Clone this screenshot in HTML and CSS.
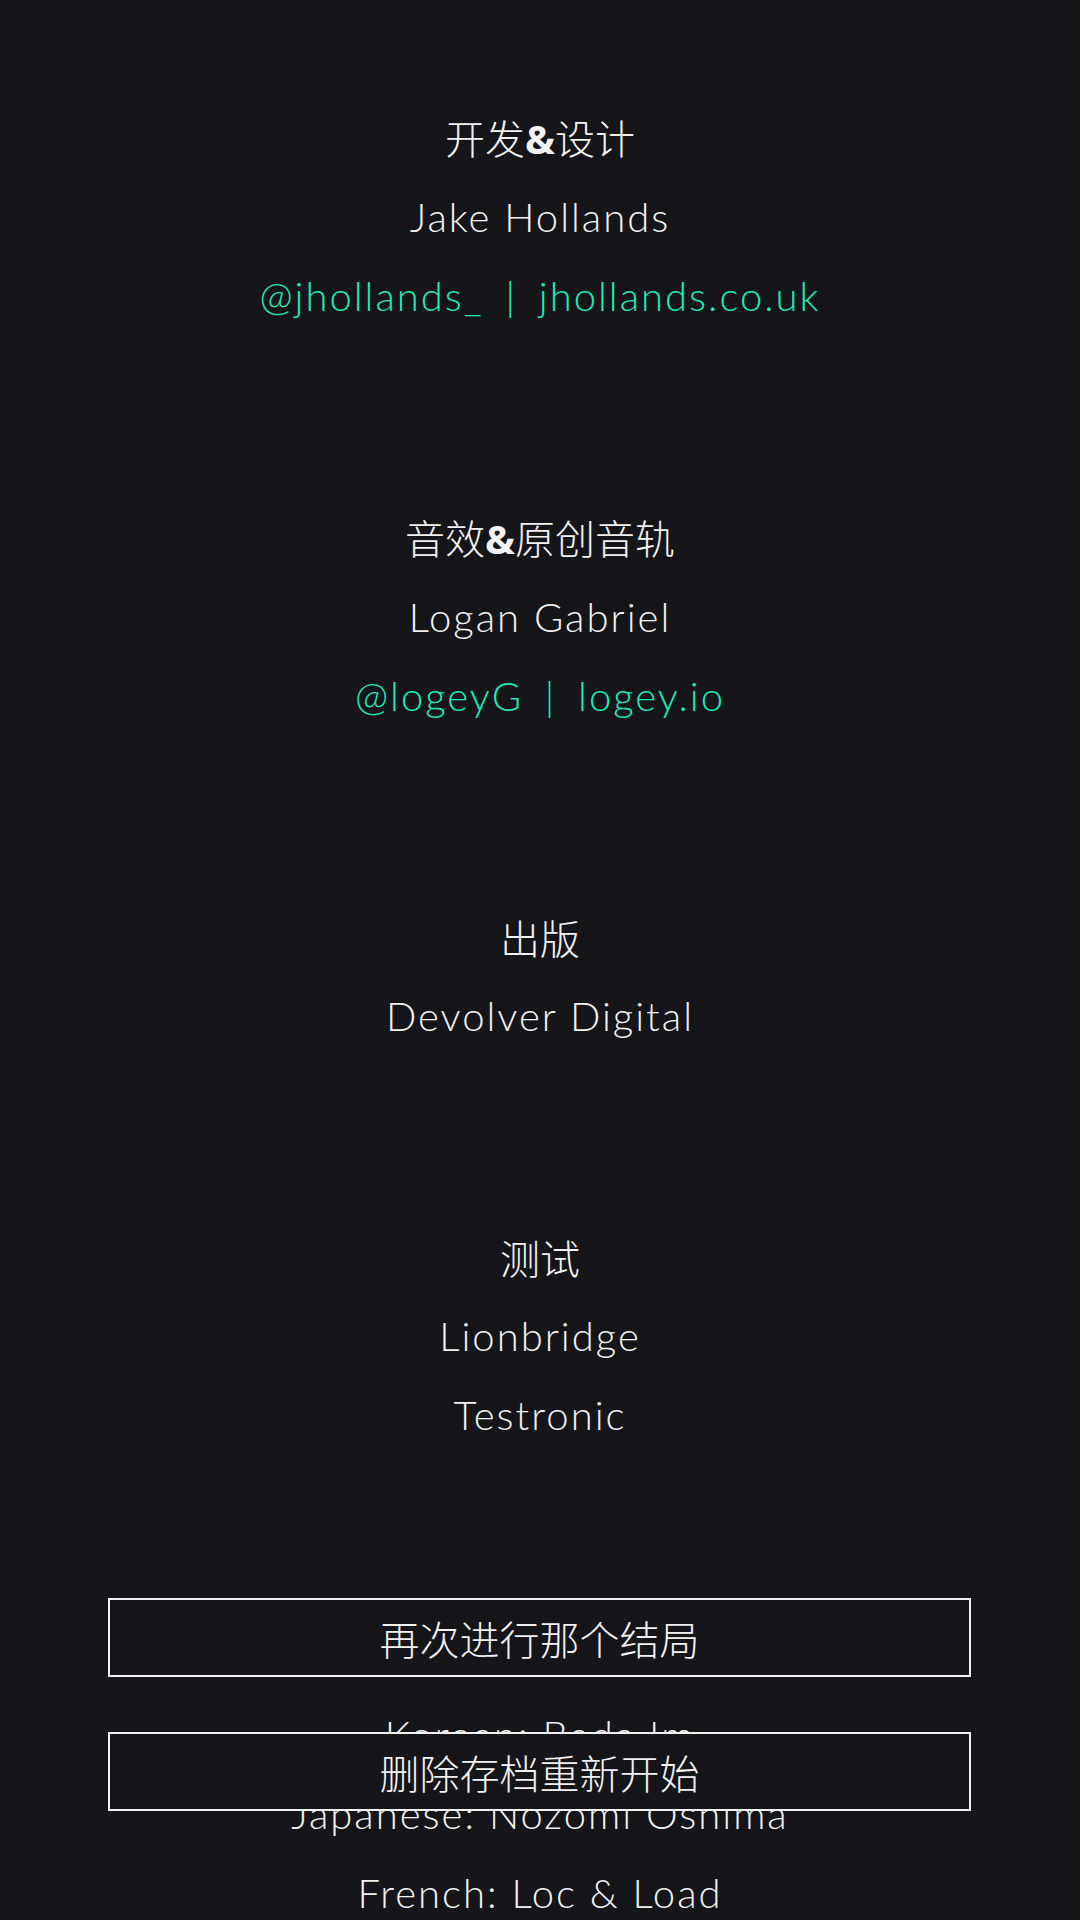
FILE: index.html
```html
<!DOCTYPE html>
<html lang="zh-CN">

<head>
    <meta charset="UTF-8">
    <meta name="viewport" content="width=device-width, initial-scale=1.0">
    <title>制作人员</title>
    <link rel="stylesheet" href="styles.css">
</head>

<body>
    <div class="credits">
        <div class="section">
            <div class="role">开发<span class="amp">&amp;</span>设计</div>
            <div class="name">Jake Hollands</div>
            <div class="link">@jhollands_ &nbsp;| &nbsp;jhollands.co.uk</div>
        </div>
        <div class="section">
            <div class="role">音效<span class="amp">&amp;</span>原创音轨</div>
            <div class="name">Logan Gabriel</div>
            <div class="link">@logeyG &nbsp;| &nbsp;logey.io</div>
        </div>
        <div class="section">
            <div class="role">出版</div>
            <div class="name">Devolver Digital</div>
        </div>
        <div class="section">
            <div class="role">测试</div>
            <div class="name">Lionbridge</div>
            <div class="name">Testronic</div>
        </div>
        <!-- 这一段的标题被按钮挡住了 -->
        <div class="section section-loc">
            <div class="name">Korean: Bada Im</div>
            <div class="name">Japanese: Nozomi Oshima</div>
            <div class="name">French: Loc &amp; Load</div>
        </div>
    </div>

    <button class="btn btn-replay">再次进行那个结局</button>
    <button class="btn btn-reset">删除存档重新开始</button>
</body>

</html>
```

FILE: styles.css
```css
html, body {
    margin: 0;
    padding: 0;
}

body {
    position: relative;
    width: 1080px;
    height: 1920px;
    overflow: hidden;
    background-color: #15151a;
    color: #f2f2f2;
    font-family: "Lato", "Noto Sans", "Noto Sans CJK SC", sans-serif;
    font-weight: 300;
}

.credits {
    padding-top: 98px;
    text-align: center;
    font-size: 40px;
    line-height: 79px;
}

.section {
    margin-bottom: 162px;
}

.section-loc {
    padding-top: 79px;
}

.role {
    font-family: "Noto Sans CJK SC", sans-serif;
    font-weight: 300;
}

.amp {
    font-family: "Open Sans", sans-serif;
    font-weight: 700;
}

.name,
.link {
    letter-spacing: 2px;
}

.link {
    color: #20ebb8;
    word-spacing: -2px;
}

.btn {
    position: absolute;
    left: 108px;
    width: 863px;
    height: 79px;
    box-sizing: border-box;
    border: 2px solid #f2f2f2;
    background-color: #15151a;
    color: #f2f2f2;
    font-family: "Noto Sans CJK SC", sans-serif;
    font-weight: 300;
    font-size: 40px;
    padding: 0;
}

.btn-replay {
    top: 1598px;
}

.btn-reset {
    top: 1732px;
}
```
